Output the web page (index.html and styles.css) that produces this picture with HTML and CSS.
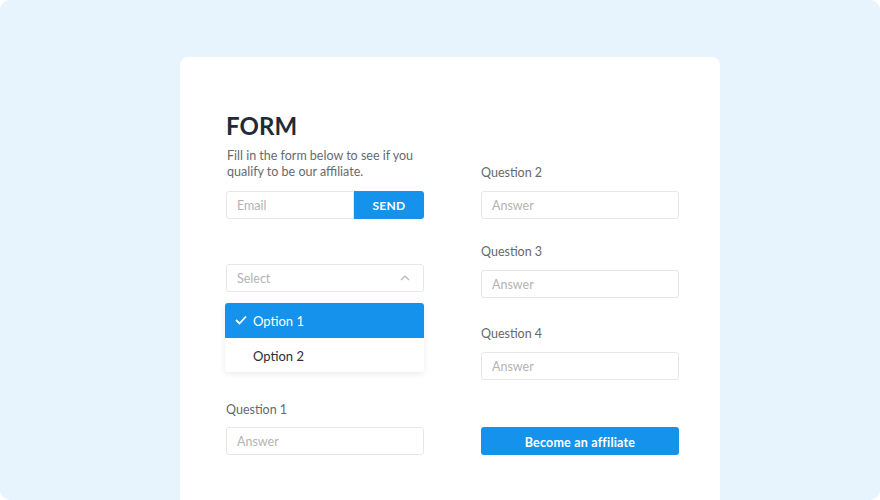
FILE: index.html
```html
<!DOCTYPE html>
<html>
<head>
<meta charset="utf-8">
<link rel="stylesheet" href="styles.css">
</head>
<body>
<div class="panel">
  <div class="card">
    <div class="col">
      <h1 class="title">FORM</h1>
      <p class="sub">Fill in the form below to see if you<br>qualify to be our affiliate.</p>
      <div class="email-row">
        <div class="input email">Email</div>
        <div class="send">SEND</div>
      </div>
      <div class="input select">
        <span>Select</span>
        <svg class="chev" width="10" height="6" viewBox="0 0 10 6"><path d="M1 5 L5 1 L9 5" fill="none" stroke="#b5b5b5" stroke-width="1.2"/></svg>
      </div>
      <div class="menu">
        <div class="opt active">
          <svg class="check" width="12" height="10" viewBox="0 0 12 10"><path d="M1 5 L4.5 8.5 L11 1.5" fill="none" stroke="#fff" stroke-width="1.8"/></svg>
          <span>Option 1</span>
        </div>
        <div class="opt"><span>Option 2</span></div>
      </div>
      <div class="label q1">Question 1</div>
      <div class="input">Answer</div>
    </div>
    <div class="col right">
      <div class="label">Question 2</div>
      <div class="input">Answer</div>
      <div class="label q3">Question 3</div>
      <div class="input">Answer</div>
      <div class="label q4">Question 4</div>
      <div class="input">Answer</div>
      <div class="cta">Become an affiliate</div>
    </div>
  </div>
</div>
</body>
</html>
```

FILE: styles.css
```css
* { box-sizing: border-box; }
html, body { margin: 0; padding: 0; background: #fff; }
body { font-family: "Lato", "Noto Sans", sans-serif; width: 880px; height: 500px; overflow: hidden; }
.panel {
  width: 880px; height: 500px; background: #e8f4fd; border-radius: 10px;
  overflow: hidden; padding-top: 57px;
}
.card {
  margin-left: 180px; width: 540px; height: 480px; background: #fff; border-radius: 8px;
  padding: 55px 41px 0 46px;
  display: grid; grid-template-columns: 198px 198px; column-gap: 57px; align-items: start;
}
.col { display: flex; flex-direction: column; }
.right { margin-top: 52px; }
.title { margin: 0; font-size: 24px; line-height: 28px; font-weight: 700; color: #1f2c37; letter-spacing: 0.1px; }
.sub { margin: 7px 0 0 1px; font-size: 12.5px; line-height: 16px; color: #666a6e; padding-top: 1px; }
.email-row { display: flex; margin-top: 11px; height: 28px; }
.input {
  height: 28px; border: 1px solid #e6e7e8; border-radius: 3px; padding: 1px 10px 0;
  font-size: 12.5px; line-height: 26px; color: #b3b3b3; background: #fff;
}
.email { width: 128px; border-radius: 3px 0 0 3px; }
.send {
  width: 70px; background: #1592ec; color: #fff; font-weight: 700; font-size: 12px;
  text-align: center; line-height: 26px; padding-top: 2px; border-radius: 0 3px 3px 0; letter-spacing: 0.3px;
}
.select { margin-top: 45px; display: flex; justify-content: space-between; align-items: center; }
.chev { margin-right: 3px; margin-top: -1px; }
.menu {
  margin-top: 11px; margin-left: -1px; width: 199px; border-radius: 3px; overflow: hidden;
  box-shadow: 0 2px 6px rgba(0,0,0,0.08); background: #fff;
}
.opt { height: 34.5px; display: flex; align-items: center; padding: 2px 0 0 28px; font-size: 13px; color: #2a2f35; }
.opt.active { background: #1592ec; color: #fff; padding-left: 10px; }
.check { margin-right: 6px; margin-top: -2px; }
.label { font-size: 12.5px; line-height: 16px; color: #66696c; padding-top: 1px; margin-bottom: 10px; }
.q1 { margin-top: 29px; margin-bottom: 9px; }
.q3 { margin-top: 24px; }
.q4 { margin-top: 27px; }
.cta {
  margin-top: 47px; height: 28px; background: #1592ec; color: #fff; border-radius: 3px;
  font-size: 12.5px; font-weight: 700; text-align: center; line-height: 24px; padding-top: 4px; letter-spacing: 0.2px;
}
```
